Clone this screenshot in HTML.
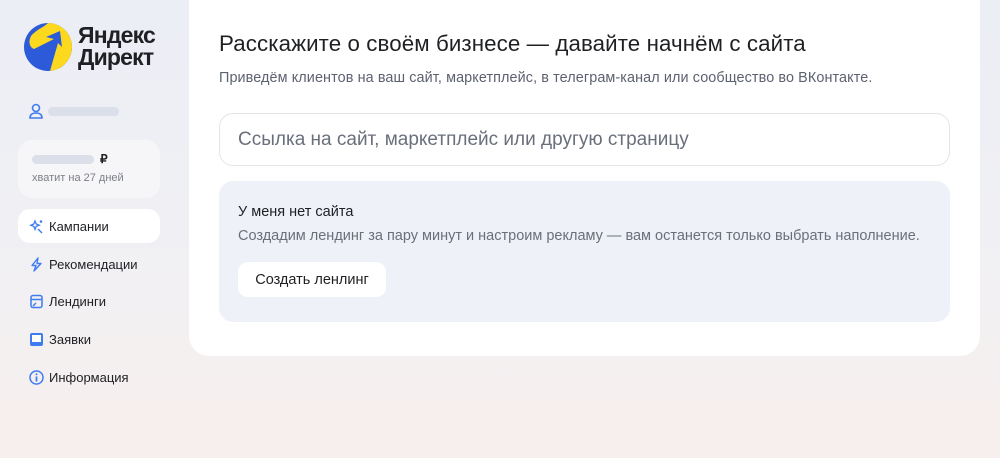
<!DOCTYPE html>
<html><head><meta charset="utf-8"><style>
*{margin:0;padding:0;box-sizing:border-box}
body{width:1000px;height:458px;overflow:hidden;font-family:"Liberation Sans",sans-serif;background:linear-gradient(180deg,#eceef5 0%,#f0f0f4 50%,#f7efed 100%);position:relative;color:#1f2024}
.a{position:absolute}
.card{left:189px;top:-20px;width:791px;height:376px;background:#fff;border-radius:20px}
.nav{left:18px;width:142px;height:34px;display:flex;align-items:center;padding-left:11px;font-size:13px;gap:5px}
.nav svg{flex:none}
</style></head><body>
<svg class="a" style="left:24px;top:23px" width="48" height="48" viewBox="0 0 48 48"><circle cx="24" cy="24" r="24" fill="#2c5ad8"/><path d="M24 0A24 24 0 0 1 48 24 A24 24 0 0 1 26 48 L34 20 L38 24 L36 8 L22 14 L30 16 L10 26 C4 24 4 14 10 10 C14 6 20 4 24 0Z" fill="#fcd91f"/></svg>
<div class="a" style="left:78px;top:24px;font-size:23px;font-weight:bold;line-height:22px;letter-spacing:-0.8px">Яндекс<br>Директ</div>
<svg class="a" style="left:29px;top:103px" width="14" height="16" viewBox="0 0 14 16"><circle cx="7" cy="5" r="3.5" fill="none" stroke="#3f7cf0" stroke-width="1.6"/><path d="M1 15c0-4 3-5 6-5s6 1 6 5z" fill="none" stroke="#3f7cf0" stroke-width="1.6"/></svg>
<div class="a" style="left:48px;top:107px;width:71px;height:9px;border-radius:5px;background:#dbdfe9"></div>
<div class="a" style="left:18px;top:140px;width:142px;height:58px;border-radius:14px;background:#f6f6f9"></div>
<div class="a" style="left:32px;top:155px;width:62px;height:9px;border-radius:5px;background:#dbdfe9"></div>
<div class="a" style="left:100px;top:152px;font-size:12px;font-weight:bold">₽</div>
<div class="a" style="left:32px;top:172px;font-size:11px;color:#7b7e87">хватит на 27 дней</div>
<div class="a nav" style="top:209px;background:#fff;border-radius:12px"><svg width="15" height="15" viewBox="0 0 15 15"><path d="M6 2l1.2 3 3 1.2-3 1.2L6 10.5 4.8 7.4 1.8 6.2l3-1.2z" fill="none" stroke="#3f7cf0" stroke-width="1.3"/><circle cx="12" cy="2.5" r="1.3" fill="#3f7cf0"/><path d="M9 10l4 4" stroke="#3f7cf0" stroke-width="1.4"/></svg>Кампании</div>
<div class="a nav" style="top:247px"><svg width="15" height="15" viewBox="0 0 15 15"><path d="M9 1L3 8.5h4l-2 5.5 7-7.5H8z" fill="none" stroke="#3f7cf0" stroke-width="1.4" stroke-linejoin="round"/></svg>Рекомендации</div>
<div class="a nav" style="top:284px"><svg width="15" height="15"><rect x="2" y="1.5" width="11" height="12" rx="2" fill="none" stroke="#3f7cf0" stroke-width="1.5"/><path d="M2 5.5h11M4 12l3-3" stroke="#3f7cf0" stroke-width="1.5"/></svg>Лендинги</div>
<div class="a nav" style="top:322px"><svg width="15" height="15"><rect x="1" y="1" width="13" height="13" rx="2" fill="#3f7cf0"/><rect x="3" y="3" width="9" height="7" fill="#fff"/></svg>Заявки</div>
<div class="a nav" style="top:360px"><svg width="15" height="15"><circle cx="7.5" cy="7.5" r="6.5" fill="none" stroke="#3f7cf0" stroke-width="1.5"/><path d="M7.5 6.5v5" stroke="#3f7cf0" stroke-width="1.8"/><circle cx="7.5" cy="4.2" r="1" fill="#3f7cf0"/></svg>Информация</div>
<div class="a card"></div>
<div class="a" style="left:219px;top:31px;font-size:22.3px;letter-spacing:0.1px">Расскажите о своём бизнесе — давайте начнём с сайта</div>
<div class="a" style="left:219px;top:70px;font-size:14.4px;color:#5d6270;letter-spacing:0.1px">Приведём клиентов на ваш сайт, маркетплейс, в телеграм-канал или сообщество во ВКонтакте.</div>
<div class="a" style="left:219px;top:113px;width:731px;height:53px;border:1px solid #e3e5ea;border-radius:14px;padding:15px 0 0 18px;font-size:19px;color:#6a6f7c">Ссылка на сайт, маркетплейс или другую страницу</div>
<div class="a" style="left:219px;top:181px;width:731px;height:141px;background:#eef1f7;border-radius:14px"></div>
<div class="a" style="left:238px;top:204px;font-size:14.5px">У меня нет сайта</div>
<div class="a" style="left:238px;top:228px;font-size:14.5px;color:#6a6f7c">Создадим лендинг за пару минут и настроим рекламу — вам останется только выбрать наполнение.</div>
<div class="a" style="left:238px;top:262px;width:148px;height:35px;background:#fff;border-radius:10px;font-size:14.5px;text-align:center;line-height:36px">Создать ленлинг</div>
</body></html>
